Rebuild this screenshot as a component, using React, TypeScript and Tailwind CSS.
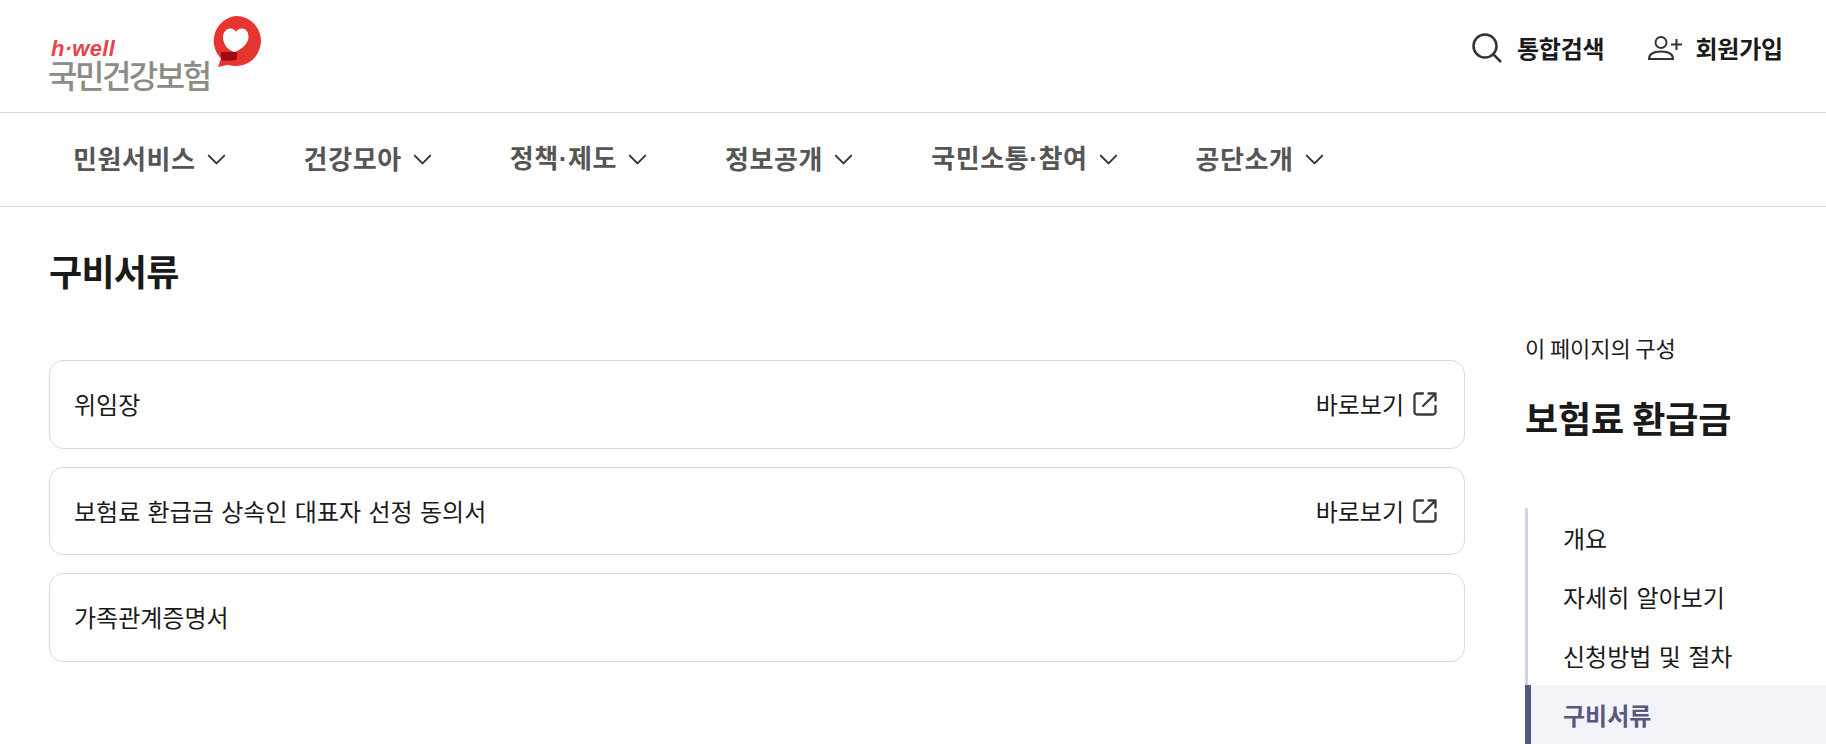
import { ChevronDown } from 'lucide-react';

const navItems = [['민원서비스'], ['건강모아'], ['정책', '제도'], ['정보공개'], ['국민소통', '참여'], ['공단소개']];

const docs = [
  { id: 1, name: '위임장', link: true },
  { id: 2, name: '보험료 환급금 상속인 대표자 선정 동의서', link: true },
  { id: 3, name: '가족관계증명서', link: false },
];

const toc = ['개요', '자세히 알아보기', '신청방법 및 절차', '구비서류'];

function Logo() {
  return (
    <div className="relative w-[214px] h-[76px] ml-[18px]">
      <span className="absolute left-[3px] top-[22px] text-[22px] leading-[18px] font-bold italic tracking-[0.3px] text-[#e8434a] font-['Liberation_Sans',sans-serif]">h·well</span>
      <span className="absolute left-0 top-[41px] text-[32px] leading-[30px] font-medium tracking-[-2.5px] text-[#8c8c84]">국민건강보험</span>
      <svg className="absolute left-[161px] -top-[3px]" width="54" height="54" viewBox="0 0 54 54">
        <path d="M27 1a25 25 0 1 1-8 48.700L9 52l3-8.500A25 25 0 0 1 27 1z" fill="#e63530" />
        <path d="M26 37C20 36 14 30 14 22C14 17 18 13.500 21 13.500C24 13.500 26 15 27 17C28 15 30 13.500 33 13.500C37 13.500 39.500 17 39.500 22C39.500 28 33 34 28 36z" fill="#fff" />
        <path d="M12 37h16v7.500C22 46 16 46 12 45z" fill="#9c0c0e" />
      </svg>
    </div>
  );
}

function ExternalIcon() {
  return (
    <svg width="26" height="26" viewBox="0 0 26 26" fill="none" stroke="#3a3a3a" strokeWidth="2.300" strokeLinecap="round" strokeLinejoin="round">
      <path d="M11 2.500H5A2.500 2.500 0 0 0 2.500 5v16A2.500 2.500 0 0 0 5 23.500h16a2.500 2.500 0 0 0 2.500-2.500V15" />
      <path d="M11 15L23.500 2.500M16.500 2.500h7v7" />
    </svg>
  );
}

export default function App() {
  return (
    <div className="h-[744px] overflow-hidden bg-white text-[#1a1a1a] font-['Noto_Sans_CJK_KR','Noto_Sans',sans-serif]">
      <header className="h-[113px] border-b border-[#d9d9d9] flex items-center justify-between pl-[30px] pr-[43px]">
        <Logo />
        <div className="flex items-center gap-[44px] -mt-[16px]">
          <button className="flex items-center gap-[15px] text-[24px] font-bold tracking-[-0.2px]">
            <svg width="30" height="30" viewBox="0 0 30 30" fill="none" stroke="#333" strokeWidth="2.500">
              <circle cx="13" cy="13" r="11.500" />
              <path d="M21.500 21.500L29 29" />
            </svg>
            통합검색
          </button>
          <button className="flex items-center gap-[13px] text-[24px] font-bold tracking-[-0.2px]">
            <svg width="34" height="24" viewBox="0 0 34 24" fill="none" stroke="#333" strokeWidth="2">
              <circle cx="13" cy="6.500" r="5.500" />
              <path d="M1 23c0-5.500 5-7.500 12-7.500s12 2 12 7.500z" />
              <path d="M23 8.500h11M28.500 3v11" />
            </svg>
            회원가입
          </button>
        </div>
      </header>

      <nav className="h-[94px] border-b border-[#d9d9d9] flex items-center pl-[73px] gap-[72px]">
        {navItems.map(item => (
          <div key={item[0]} className="flex items-center gap-[5px] text-[26px] font-bold tracking-[0.6px] text-[#555]">
            <span className="-translate-y-[2px]">
              {item[0]}
              {item[1] && <span className="font-['Liberation_Sans',sans-serif]">·</span>}
              {item[1]}
            </span>
            <ChevronDown size={31} strokeWidth={1.5} className="text-[#333]" />
          </div>
        ))}
      </nav>

      <main className="pl-[49px] flex">
        <div className="w-[1416px]">
          <h1 className="mt-[37px] text-[36px] leading-[52px] font-bold -tracking-[0.7px]">구비서류</h1>
          <div className="mt-[64px] flex flex-col gap-[18px]">
            {docs.map(doc => (
              <div key={doc.id} className="h-[88.5px] rounded-[14px] border border-[#d9d9d9] flex items-center justify-between pl-[24px] pr-[26px] text-[24px] [word-spacing:2px]">
                <span>{doc.name}</span>
                {doc.link && (
                  <span className="flex items-center gap-[8px]">
                    바로보기
                    <ExternalIcon />
                  </span>
                )}
              </div>
            ))}
          </div>
        </div>
        <aside className="ml-[60px] flex-1 pt-[124px]">
          <p className="text-[22px] leading-[32px] -tracking-[0.1px]">이 페이지의 구성</p>
          <h2 className="mt-[28px] text-[36px] leading-[52px] font-bold -tracking-[0.1px]">보험료 환급금</h2>
          <ul className="mt-[65px] border-l-[3px] border-[#ccd6e4]">
            {toc.map((t, i) => {
              const active = i === toc.length - 1;
              return (
                <li key={t} className={active ? 'h-[60px] -ml-[3px] border-l-[6px] border-[#555a7c] bg-[#f3f4fa] pl-[32px] flex items-center text-[24px] font-bold text-[#555a7c]' : 'h-[59px] pl-[35px] flex items-center text-[24px] [word-spacing:2px]'}>
                  {t}
                </li>
              );
            })}
          </ul>
        </aside>
      </main>
    </div>
  );
}
